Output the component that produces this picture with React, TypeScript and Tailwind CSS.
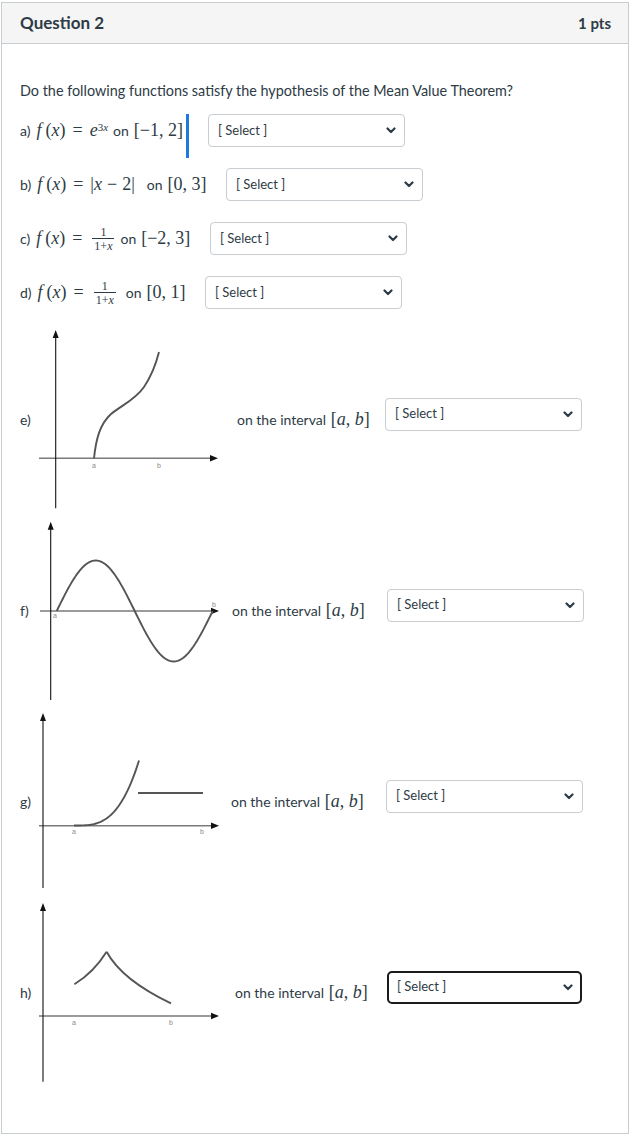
import React from "react";

const I = ({ children }: { children: React.ReactNode }) => <span className="italic">{children}</span>;

const Math = ({ children, className = "" }: { children: React.ReactNode; className?: string }) => (
  <span className={"font-['Liberation_Serif',serif] text-[18px] text-[#2d3b45] whitespace-nowrap " + className}>{children}</span>
);

const Frac = () => (
  <span className="mx-[3px] inline-flex flex-col items-center align-middle text-[12px] leading-[12px]">
    <span className="px-[1px]">1</span>
    <span className="border-t border-[#2d3b45] px-[2px] pt-[1px]">
      1+<I>x</I>
    </span>
  </span>
);

const Chevron = () => (
  <svg width="10" height="7" viewBox="0 0 10 7">
    <path d="M1.5 1.5 L5 5 L8.5 1.5" fill="none" stroke="#2d3b45" strokeWidth="2.2" strokeLinecap="round" strokeLinejoin="round" />
  </svg>
);

const Select = ({ className }: { className: string }) => (
  <div className={className}>
    <span className="text-[13px] text-[#2d3b45]">[ Select ]</span>
    <Chevron />
  </div>
);

const selBase =
  "flex h-[33px] w-[197px] shrink-0 items-center justify-between rounded-[4px] border border-[#c7cdd1] bg-white pl-[9px] pr-[8px]";
const selFocus =
  "flex h-[33px] w-[195px] shrink-0 items-center justify-between rounded-[5px] border-2 border-[#1b1b1b] bg-white pl-[8px] pr-[7px]";

const AXIS = "#7a7a7a";
const CURVE = "#555555";

const Axes = ({ yx, yTop, yBottom, xy, x0, x1 }: { yx: number; yTop: number; yBottom: number; xy: number; x0: number; x1: number }) => (
  <g>
    <line x1={x0} y1={xy} x2={x1 - 6} y2={xy} stroke={AXIS} strokeWidth="1.6" />
    <polygon points={`${x1},${xy} ${x1 - 8},${xy - 3.2} ${x1 - 8},${xy + 3.2}`} fill="#111" />
    <line x1={yx} y1={yTop + 6} x2={yx} y2={yBottom} stroke="#111" strokeWidth="1.1" />
    <polygon points={`${yx},${yTop} ${yx - 3},${yTop + 8} ${yx + 3},${yTop + 8}`} fill="#111" />
  </g>
);

const Lbl = ({ x, y, t }: { x: number; y: number; t: string }) => (
  <text x={x} y={y} fontSize="7" fill="#8a8a8a" textAnchor="middle" fontFamily="Liberation Sans, sans-serif">
    {t}
  </text>
);

const GraphE = () => (
  <svg width="190" height="184" viewBox="0 0 190 184" className="shrink-0">
    <Axes yx={19.7} yTop={3} yBottom={181.3} xy={131.3} x0={3} x1={182} />
    <path d="M58,131.3 C60,112 64,97 75,87 C86,78 99,73 108,60 C116,48 120,37 123,25" fill="none" stroke={CURVE} strokeWidth="1.9" />
    <Lbl x={58} y={141} t="a" />
    <Lbl x={123} y={141} t="b" />
  </svg>
);

const sinePts = Array.from({ length: 81 }, (_, i) => {
  const t = i / 80;
  const x = 20.7 + 156 * t;
  const y = 93 - 50.5 * globalThis.Math.sin(2 * globalThis.Math.PI * t);
  return `${x.toFixed(2)},${y.toFixed(2)}`;
}).join(" ");

const GraphF = () => (
  <svg width="190" height="184" viewBox="0 0 190 184" className="shrink-0">
    <Axes yx={14.7} yTop={3.7} yBottom={182} xy={93} x0={4} x1={183} />
    <polyline points={sinePts} fill="none" stroke={CURVE} strokeWidth="1.9" />
    <Lbl x={19} y={100} t="a" />
    <Lbl x={178} y={89} t="b" />
  </svg>
);

const gPts = Array.from({ length: 41 }, (_, i) => {
  const dx = (65 * i) / 40;
  const x = 38 + dx;
  const y = 116.5 - 65 * globalThis.Math.pow(dx / 65, 3.2);
  return `${x.toFixed(2)},${y.toFixed(2)}`;
}).join(" ");

const GraphG = () => (
  <svg width="190" height="184" viewBox="0 0 190 184" className="shrink-0">
    <Axes yx={7} yTop={4} yBottom={179} xy={116.7} x0={3} x1={183} />
    <polyline points={gPts} fill="none" stroke={CURVE} strokeWidth="1.9" />
    <line x1={102} y1={84} x2={167} y2={84} stroke={CURVE} strokeWidth="2" />
    <Lbl x={38} y={125} t="a" />
    <Lbl x={166} y={125} t="b" />
  </svg>
);

const GraphH = () => (
  <svg width="190" height="184" viewBox="0 0 190 184" className="shrink-0">
    <Axes yx={7} yTop={3} yBottom={181.7} xy={116} x0={3} x1={183} />
    <path d="M38.4,84.3 Q58,72 70.6,51.7" fill="none" stroke={CURVE} strokeWidth="1.9" />
    <path d="M70.6,51.7 Q86,80 135,103.3" fill="none" stroke={CURVE} strokeWidth="1.9" />
    <Lbl x={38} y={125} t="a" />
    <Lbl x={135} y={125} t="b" />
  </svg>
);

const Interval = () => (
  <>
    on the interval{" "}
    <Math className="ml-[1px] text-[17px]">
      [<I>a</I>, <I>b</I>]
    </Math>
  </>
);

const FX = () => (
  <>
    <I>f</I>
    <span className="ml-[4px]">(</span>
    <I>x</I>)<span className="mx-[7px]">=</span>
  </>
);

export default function App() {
  return (
    <div className="min-h-[1139px] w-[630px] bg-white pl-[1px] pt-[2px] font-['Lato',sans-serif] text-[#2d3b45]">
      <div className="w-[628px] border border-[#c7cdd1]">
        <div className="flex h-[41px] items-center justify-between border-b border-[#c7cdd1] bg-[#f5f5f5] pl-[18px] pr-[17px]">
          <span className="text-[17px] font-bold">Question 2</span>
          <span className="text-[15px] font-bold">1 pts</span>
        </div>
        <div className="pb-[49px] pl-[18px] pt-[37px]">
          <p className="text-[14.4px] leading-[20px]">Do the following functions satisfy the hypothesis of the Mean Value Theorem?</p>

          {/* a */}
          <div className="mt-[13px] flex h-[33px] items-center">
            <div className="flex w-[166px] items-center text-[14px]">
              <span>a)</span>
              <Math className="ml-[6px]">
                <FX />
                <I>e</I>
                <sup className="text-[11px]">
                  3<I>x</I>
                </sup>
              </Math>
              <span className="ml-[5px]">on</span>
              <Math className="ml-[5px]">[−1, 2]</Math>
            </div>
            <div className="h-[44px] w-[3px] shrink-0 self-start bg-[#1d7be0]" />
            <div className="ml-[19px]">
              <Select className={selBase} />
            </div>
          </div>

          {/* b */}
          <div className="mt-[21px] flex h-[33px] items-center">
            <div className="flex w-[206px] items-center text-[14px]">
              <span>b)</span>
              <Math className="ml-[6px]">
                <FX />|<I>x</I>
                <span className="mx-[5px]">−</span>2|
              </Math>
              <span className="ml-[12px]">on</span>
              <Math className="ml-[5px]">[0, 3]</Math>
            </div>
            <Select className={selBase} />
          </div>

          {/* c */}
          <div className="mt-[21px] flex h-[33px] items-center">
            <div className="flex w-[190px] items-center text-[14px]">
              <span>c)</span>
              <Math className="ml-[6px] flex items-center">
                <FX />
                <Frac />
              </Math>
              <span className="ml-[3px]">on</span>
              <Math className="ml-[5px]">[−2, 3]</Math>
            </div>
            <Select className={selBase} />
          </div>

          {/* d */}
          <div className="mt-[21px] flex h-[33px] items-center">
            <div className="flex w-[185px] items-center text-[14px]">
              <span>d)</span>
              <Math className="ml-[6px] flex items-center">
                <FX />
                <Frac />
              </Math>
              <span className="ml-[7px]">on</span>
              <Math className="ml-[5px]">[0, 1]</Math>
            </div>
            <Select className={selBase} />
          </div>

          {/* e */}
          <div className="mt-[18px] flex items-center">
            <span className="w-[16px] shrink-0 text-[14px]">e)</span>
            <GraphE />
            <span className="ml-[11px] w-[148px] shrink-0 text-[14px]">
              <Interval />
            </span>
            <div className="mb-[10px]">
              <Select className={selBase} />
            </div>
          </div>

          {/* f */}
          <div className="mt-[7px] flex items-center">
            <span className="w-[16px] shrink-0 text-[14px]">f)</span>
            <GraphF />
            <span className="ml-[6px] w-[155px] shrink-0 text-[14px]">
              <Interval />
            </span>
            <div className="mb-[10px]">
              <Select className={selBase} />
            </div>
          </div>

          {/* g */}
          <div className="mt-[7px] flex items-center">
            <span className="w-[16px] shrink-0 text-[14px]">g)</span>
            <GraphG />
            <span className="ml-[5px] w-[155px] shrink-0 text-[14px]">
              <Interval />
            </span>
            <div className="mb-[10px]">
              <Select className={selBase} />
            </div>
          </div>

          {/* h */}
          <div className="mt-[7px] flex items-center">
            <span className="w-[16px] shrink-0 text-[14px]">h)</span>
            <GraphH />
            <span className="ml-[9px] w-[152px] shrink-0 text-[14px]">
              <Interval />
            </span>
            <div className="mb-[10px]">
              <Select className={selFocus} />
            </div>
          </div>
        </div>
      </div>
    </div>
  );
}
